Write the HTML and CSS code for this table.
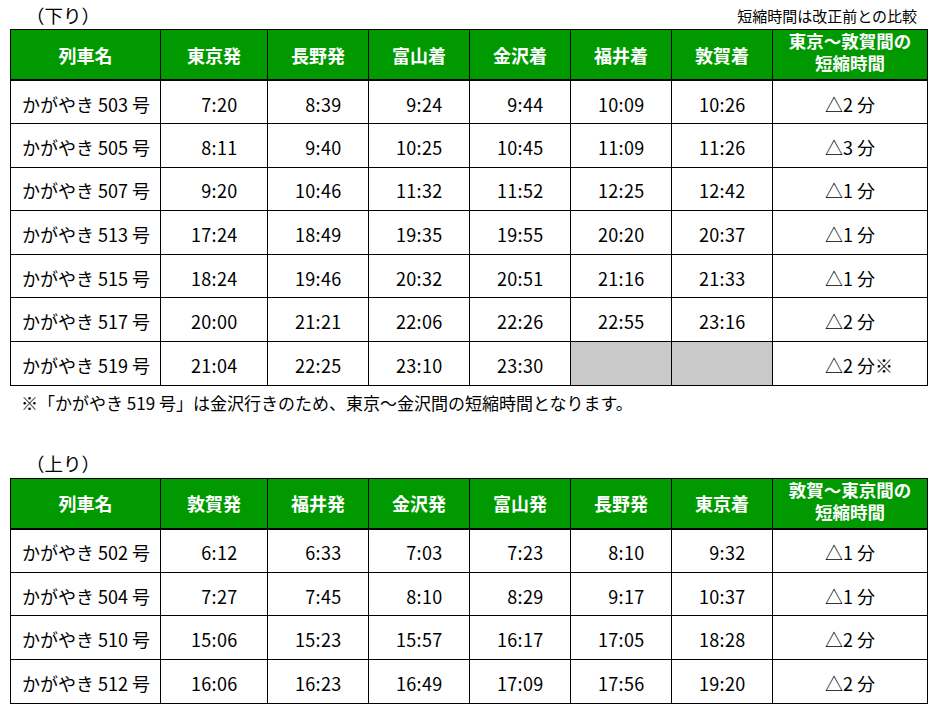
FILE: index.html
```html
<!DOCTYPE html>
<html lang="ja">
<head>
<meta charset="utf-8">
<title>かがやき 時刻表</title>
<link rel="stylesheet" href="styles.css">
</head>
<body>
<div class="page">
  <div class="sec-head">
    <div class="sec-title">（下り）</div>
    <div class="sec-note">短縮時間は改正前との比較</div>
  </div>
  <table class="tt">
    <colgroup>
      <col class="c-name"><col class="c-first"><col class="c-t"><col class="c-t"><col class="c-t"><col class="c-t"><col class="c-t"><col class="c-last">
    </colgroup>
    <thead>
      <tr class="hd">
        <th>列車名</th><th>東京発</th><th>長野発</th><th>富山着</th><th>金沢着</th><th>福井着</th><th>敦賀着</th><th class="two"><span class="ln">東京～敦賀間の</span><span class="ln">短縮時間</span></th>
      </tr>
    </thead>
    <tbody>
      <tr><td class="nm">かがやき 503 号</td><td class="tm"><span>7:20</span></td><td class="tm"><span>8:39</span></td><td class="tm"><span>9:24</span></td><td class="tm"><span>9:44</span></td><td class="tm"><span>10:09</span></td><td class="tm"><span>10:26</span></td><td class="df">△2 分</td></tr>
      <tr><td class="nm">かがやき 505 号</td><td class="tm"><span>8:11</span></td><td class="tm"><span>9:40</span></td><td class="tm"><span>10:25</span></td><td class="tm"><span>10:45</span></td><td class="tm"><span>11:09</span></td><td class="tm"><span>11:26</span></td><td class="df">△3 分</td></tr>
      <tr><td class="nm">かがやき 507 号</td><td class="tm"><span>9:20</span></td><td class="tm"><span>10:46</span></td><td class="tm"><span>11:32</span></td><td class="tm"><span>11:52</span></td><td class="tm"><span>12:25</span></td><td class="tm"><span>12:42</span></td><td class="df">△1 分</td></tr>
      <tr><td class="nm">かがやき 513 号</td><td class="tm"><span>17:24</span></td><td class="tm"><span>18:49</span></td><td class="tm"><span>19:35</span></td><td class="tm"><span>19:55</span></td><td class="tm"><span>20:20</span></td><td class="tm"><span>20:37</span></td><td class="df">△1 分</td></tr>
      <tr><td class="nm">かがやき 515 号</td><td class="tm"><span>18:24</span></td><td class="tm"><span>19:46</span></td><td class="tm"><span>20:32</span></td><td class="tm"><span>20:51</span></td><td class="tm"><span>21:16</span></td><td class="tm"><span>21:33</span></td><td class="df">△1 分</td></tr>
      <tr><td class="nm">かがやき 517 号</td><td class="tm"><span>20:00</span></td><td class="tm"><span>21:21</span></td><td class="tm"><span>22:06</span></td><td class="tm"><span>22:26</span></td><td class="tm"><span>22:55</span></td><td class="tm"><span>23:16</span></td><td class="df">△2 分</td></tr>
      <tr><td class="nm">かがやき 519 号</td><td class="tm"><span>21:04</span></td><td class="tm"><span>22:25</span></td><td class="tm"><span>23:10</span></td><td class="tm"><span>23:30</span></td><td class="na"></td><td class="na"></td><td class="df">△2 分※</td></tr>
    </tbody>
  </table>
  <p class="foot">※「かがやき 519 号」は金沢行きのため、東京～金沢間の短縮時間となります。</p>

  <div class="sec-head">
    <div class="sec-title">（上り）</div>
  </div>
  <table class="tt">
    <colgroup>
      <col class="c-name"><col class="c-first"><col class="c-t"><col class="c-t"><col class="c-t"><col class="c-t"><col class="c-t"><col class="c-last">
    </colgroup>
    <thead>
      <tr class="hd">
        <th>列車名</th><th>敦賀発</th><th>福井発</th><th>金沢発</th><th>富山発</th><th>長野発</th><th>東京着</th><th class="two"><span class="ln">敦賀～東京間の</span><span class="ln">短縮時間</span></th>
      </tr>
    </thead>
    <tbody>
      <tr><td class="nm">かがやき 502 号</td><td class="tm"><span>6:12</span></td><td class="tm"><span>6:33</span></td><td class="tm"><span>7:03</span></td><td class="tm"><span>7:23</span></td><td class="tm"><span>8:10</span></td><td class="tm"><span>9:32</span></td><td class="df">△1 分</td></tr>
      <tr><td class="nm">かがやき 504 号</td><td class="tm"><span>7:27</span></td><td class="tm"><span>7:45</span></td><td class="tm"><span>8:10</span></td><td class="tm"><span>8:29</span></td><td class="tm"><span>9:17</span></td><td class="tm"><span>10:37</span></td><td class="df">△1 分</td></tr>
      <tr><td class="nm">かがやき 510 号</td><td class="tm"><span>15:06</span></td><td class="tm"><span>15:23</span></td><td class="tm"><span>15:57</span></td><td class="tm"><span>16:17</span></td><td class="tm"><span>17:05</span></td><td class="tm"><span>18:28</span></td><td class="df">△2 分</td></tr>
      <tr><td class="nm">かがやき 512 号</td><td class="tm"><span>16:06</span></td><td class="tm"><span>16:23</span></td><td class="tm"><span>16:49</span></td><td class="tm"><span>17:09</span></td><td class="tm"><span>17:56</span></td><td class="tm"><span>19:20</span></td><td class="df">△2 分</td></tr>
    </tbody>
  </table>
</div>
</body>
</html>
```

FILE: styles.css
```css
html, body {
  margin: 0;
  padding: 0;
  background: #ffffff;
}
body {
  font-family: "Noto Sans CJK JP", "Noto Sans", sans-serif;
  color: #000000;
}
.page {
  width: 917px;
  padding-left: 10px;
}
.sec-head {
  height: 29px;
  display: flex;
  justify-content: space-between;
  align-items: center;
}
.sec-title {
  font-size: 18.5px;
  line-height: 24px;
  padding-left: 16px;
}
.sec-note {
  font-size: 15px;
  line-height: 20px;
  padding-right: 10px;
  padding-top: 2px;
}
.tt {
  width: 917px;
  table-layout: fixed;
  border-collapse: collapse;
}
.c-name { width: 150px; }
.c-first { width: 107px; }
.c-t { width: 101px; }
.c-last { width: 155px; }
.tt tr.hd {
  height: 50px;
}
.tt th {
  background: #009900;
  color: #ffffff;
  font-weight: bold;
  font-size: 18px;
  line-height: 22px;
  padding: 0;
  border: 1px solid #000000;
  border-bottom-width: 2px;
  text-align: center;
  vertical-align: middle;
}
.tt th .ln {
  display: block;
  line-height: 22px;
}
.tt th.two {
  font-size: 17.5px;
  padding-bottom: 5px;
}
.tt tbody tr {
  height: 43.6px;
}
.tt td {
  padding: 3px 0 0 0;
  border: 1px solid #000000;
  font-size: 18px;
  line-height: 22px;
  vertical-align: middle;
}
.tt td.nm {
  text-align: left;
  padding-left: 11px;
}
.tt td.tm {
  text-align: center;
}
.tt td.tm span {
  display: inline-block;
  width: 47px;
  text-align: right;
  letter-spacing: 0.3px;
}
.tt td.df {
  text-align: left;
  padding-left: 52px;
}
.tt td.na {
  background: #c9c9c9;
}
.foot {
  margin: 6px 0 35px 0;
  font-size: 17px;
  line-height: 22px;
  padding-left: 11px;
}
```
